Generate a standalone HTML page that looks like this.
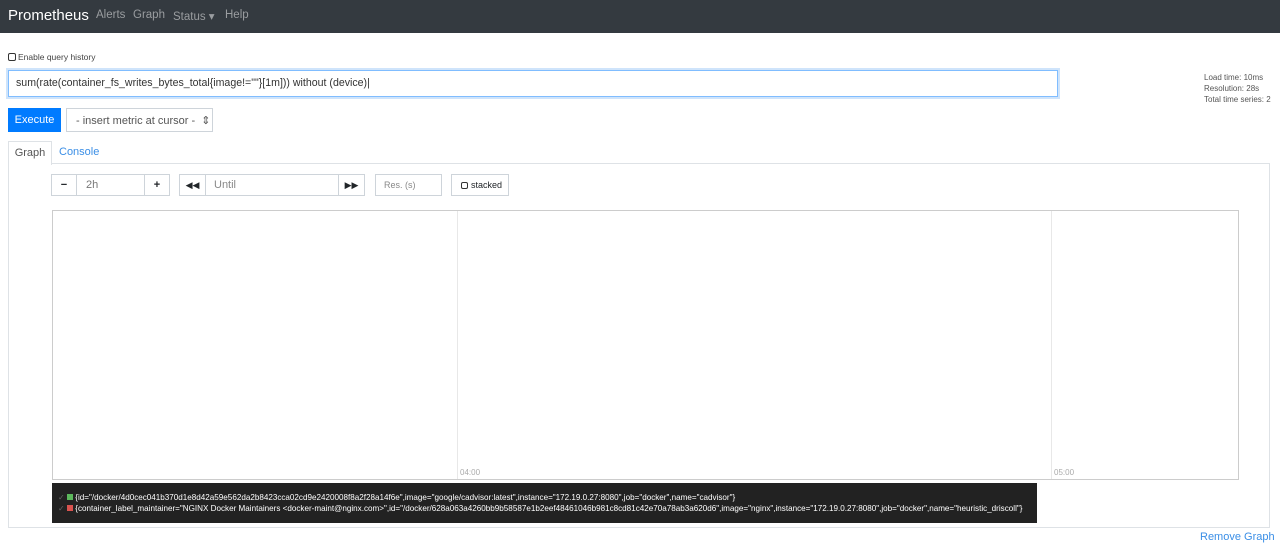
<!DOCTYPE html><html><head><style>
body{margin:0;font-family:"Liberation Sans",sans-serif;background:#fff;width:1280px;height:553px;overflow:hidden;position:relative;color:#212529}
.a{position:absolute}
nav{position:absolute;left:0;top:0;width:1280px;height:33px;background:#343a40}
.btn{position:absolute;border:1px solid #ced4da;box-sizing:border-box;font-size:11px;display:flex;align-items:center}
</style></head><body>
<nav><span class="a" style="left:8px;top:7px;color:#fff;font-size:15px">Prometheus</span>
<span class="a" style="left:96px;top:9px;color:#9a9da0;font-size:11.5px">Alerts</span>
<span class="a" style="left:133px;top:9px;color:#9a9da0;font-size:11.5px">Graph</span>
<span class="a" style="left:173px;top:9px;color:#9a9da0;font-size:11.5px">Status ▾</span>
<span class="a" style="left:225px;top:9px;color:#9a9da0;font-size:11.5px">Help</span></nav>
<div class="a" style="left:8px;top:53px;width:6px;height:6px;border:1px solid #333;border-radius:2px"></div>
<span class="a" style="left:18px;top:52px;font-size:8.5px;color:#444">Enable query history</span>
<div class="a" style="left:8px;top:70px;width:1050px;height:27px;border:1px solid #80bdff;box-shadow:0 0 0 2px #cfe4fb;box-sizing:border-box;font-size:10.6px;padding:6px 7px;color:#333">sum(rate(container_fs_writes_bytes_total{image!=""}[1m])) without (device)|</div>
<div class="a" style="left:1204px;top:72px;font-size:8px;color:#555;line-height:11px">Load time: 10ms<br>Resolution: 28s<br>Total time series: 2</div>
<div class="a" style="left:8px;top:108px;width:53px;height:24px;background:#007bff;color:#fff;font-size:11px;text-align:center;line-height:25px">Execute</div>
<div class="btn" style="left:66px;top:108px;width:147px;height:24px;padding-left:9px;color:#555">- insert metric at cursor - &nbsp;⇕</div>
<div class="a" style="left:8px;top:141px;width:42px;height:23px;border:1px solid #dee2e6;border-bottom:none;background:#fff;font-size:11px;color:#555;text-align:center;line-height:22px;z-index:2">Graph</div>
<span class="a" style="left:59px;top:146px;font-size:11px;color:#3a8ee6">Console</span>
<div class="a" style="left:8px;top:163px;width:1262px;height:365px;border:1px solid #dee2e6;box-sizing:border-box"></div>
<div class="btn" style="left:51px;top:174px;width:26px;height:22px;justify-content:center;font-weight:bold">−</div>
<div class="btn" style="left:76px;top:174px;width:69px;height:22px;padding-left:9px;color:#777">2h</div>
<div class="btn" style="left:144px;top:174px;width:26px;height:22px;justify-content:center;font-weight:bold">+</div>
<div class="btn" style="left:179px;top:174px;width:27px;height:22px;justify-content:center;font-size:9px">◀◀</div>
<div class="btn" style="left:205px;top:174px;width:134px;height:22px;padding-left:8px;color:#888">Until</div>
<div class="btn" style="left:338px;top:174px;width:27px;height:22px;justify-content:center;font-size:9px">▶▶</div>
<div class="btn" style="left:375px;top:174px;width:67px;height:22px;padding-left:8px;color:#888;font-size:9px">Res. (s)</div>
<div class="btn" style="left:451px;top:174px;width:58px;height:22px;padding-left:9px;font-size:9px"><span style="display:inline-block;width:5px;height:5px;border:1px solid #333;border-radius:2px;margin-right:3px"></span>stacked</div>
<div class="a" style="left:52px;top:210px;width:1187px;height:270px;border:1px solid #ccc;box-sizing:border-box"></div>
<div class="a" style="left:457px;top:211px;width:1px;height:268px;background:#e8e8e8"></div>
<div class="a" style="left:1051px;top:211px;width:1px;height:268px;background:#e8e8e8"></div>
<span class="a" style="left:460px;top:468px;font-size:8px;color:#aaa">04:00</span>
<span class="a" style="left:1054px;top:468px;font-size:8px;color:#aaa">05:00</span>
<div class="a" style="left:52px;top:483px;width:985px;height:40px;background:#222;color:#fff;font-size:8.1px;line-height:11px;padding:9px 0 0 6px;box-sizing:border-box;white-space:nowrap;overflow:hidden">
<div><span style="color:#666">✓</span> <span style="display:inline-block;width:6px;height:6px;background:#5cb85c"></span> {id="/docker/4d0cec041b370d1e8d42a59e562da2b8423cca02cd9e2420008f8a2f28a14f6e",image="google/cadvisor:latest",instance="172.19.0.27:8080",job="docker",name="cadvisor"}</div>
<div><span style="color:#666">✓</span> <span style="display:inline-block;width:6px;height:6px;background:#d9534f"></span> {container_label_maintainer="NGINX Docker Maintainers &lt;docker-maint@nginx.com&gt;",id="/docker/628a063a4260bb9b58587e1b2eef48461046b981c8cd81c42e70a78ab3a620d6",image="nginx",instance="172.19.0.27:8080",job="docker",name="heuristic_driscoll"}</div></div>
<span class="a" style="left:1200px;top:531px;font-size:11px;color:#3a8ee6">Remove Graph</span>
</body></html>
